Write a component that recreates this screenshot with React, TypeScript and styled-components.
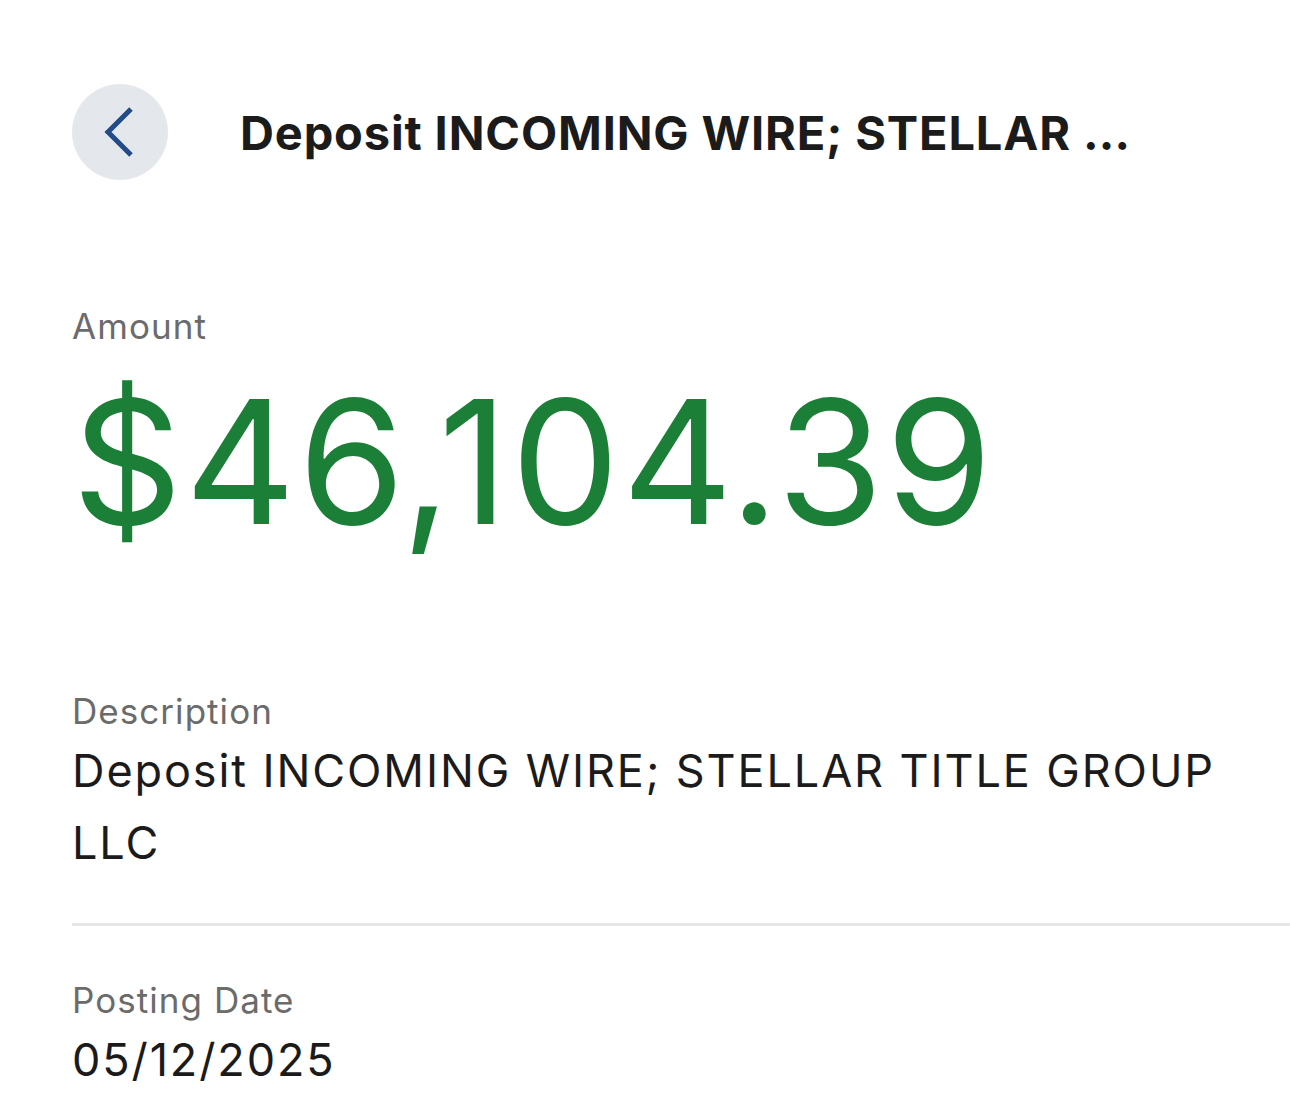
import React from 'react';
import styled, { createGlobalStyle } from 'styled-components';

const GlobalStyle = createGlobalStyle`
  html, body {
    margin: 0;
    padding: 0;
    background: #ffffff;
  }
  body {
    font-family: Inter, "Noto Sans", Roboto, sans-serif;
    -webkit-font-smoothing: antialiased;
  }
`;

const Page = styled.div`
  width: 1290px;
  height: 1107px;
  overflow: hidden;
  background: #ffffff;
  display: flex;
  flex-direction: column;
  padding-top: 84px;
  box-sizing: border-box;
`;

const Header = styled.header`
  display: flex;
  align-items: center;
  gap: 72px;
  padding: 0 148px 0 72px;
`;

const BackButton = styled.button`
  flex: none;
  width: 96px;
  height: 96px;
  border: none;
  border-radius: 50%;
  background: #e4e7ec;
  display: flex;
  align-items: center;
  justify-content: center;
  padding: 0;
  cursor: pointer;
`;

const Title = styled.h1`
  margin: 0;
  min-width: 0;
  font-size: 47px;
  font-weight: 700;
  color: #1b1b1b;
  white-space: nowrap;
  overflow: hidden;
  text-overflow: ellipsis;
  letter-spacing: 0.85px;
`;

const Body = styled.main`
  display: flex;
  flex-direction: column;
  padding-left: 72px;
  margin-top: 124px;
`;

const Field = styled.section<{ $divider?: boolean }>`
  display: flex;
  flex-direction: column;
  padding-right: 72px;
  padding-bottom: ${(p) => (p.$divider ? '44px' : '0')};
  border-bottom: ${(p) => (p.$divider ? '3px solid #e6e6e6' : 'none')};
  margin-right: ${(p) => (p.$divider ? '-72px' : '0')};
`;

const Label = styled.div`
  font-size: 35px;
  line-height: 44px;
  color: #6b6b6b;
  letter-spacing: 1.05px;
`;

const Amount = styled.div`
  font-size: 172px;
  line-height: 226px;
  font-weight: 400;
  color: #1c7f37;
  letter-spacing: 2.4px;
  margin-bottom: 115px;
`;

const Value = styled.div`
  margin-top: 2px;
  font-size: 45px;
  line-height: 72px;
  color: #1b1b1b;
  letter-spacing: 1.9px;
  max-width: 1160px;
`;

const Spacer = styled.div`
  height: 52px;
`;

const ChevronLeft = () => (
  <svg width="32" height="50" viewBox="0 0 32 50" fill="none">
    <path d="M27 2 L4 25 L27 48" stroke="#234b87" strokeWidth="5" strokeLinecap="butt" />
  </svg>
);

export default function App() {
  return (
    <>
      <GlobalStyle />
      <Page>
        <Header>
          <BackButton aria-label="Back">
            <ChevronLeft />
          </BackButton>
          <Title>Deposit INCOMING WIRE; STELLAR TITLE GROUP LLC</Title>
        </Header>
        <Body>
          <Field>
            <Label>Amount</Label>
            <Amount>$46,104.39</Amount>
          </Field>
          <Field $divider>
            <Label>Description</Label>
            <Value>Deposit INCOMING WIRE; STELLAR TITLE GROUP LLC</Value>
          </Field>
          <Spacer />
          <Field>
            <Label>Posting Date</Label>
            <Value>05/12/2025</Value>
          </Field>
        </Body>
      </Page>
    </>
  );
}
